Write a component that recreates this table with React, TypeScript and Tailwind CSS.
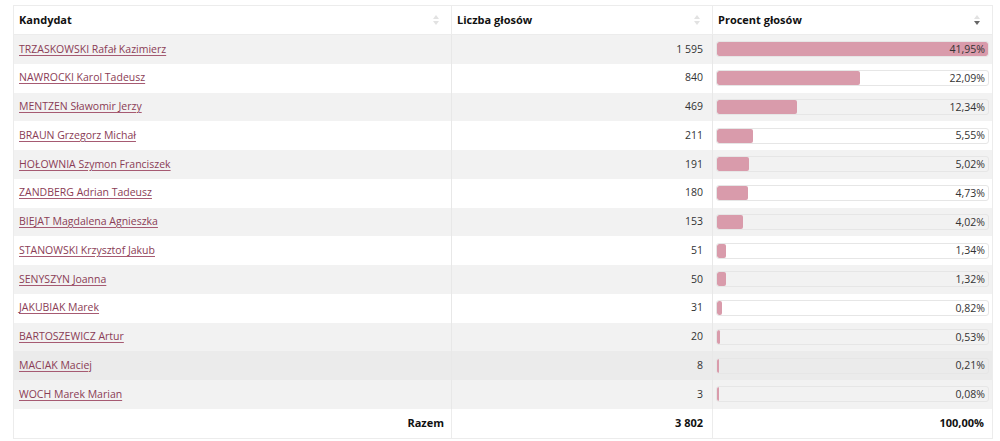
import React from "react";

const rows: [string, string, number][] = [
  ["TRZASKOWSKI Rafał Kazimierz", "1 595", 41.95],
  ["NAWROCKI Karol Tadeusz", "840", 22.09],
  ["MENTZEN Sławomir Jerzy", "469", 12.34],
  ["BRAUN Grzegorz Michał", "211", 5.55],
  ["HOŁOWNIA Szymon Franciszek", "191", 5.02],
  ["ZANDBERG Adrian Tadeusz", "180", 4.73],
  ["BIEJAT Magdalena Agnieszka", "153", 4.02],
  ["STANOWSKI Krzysztof Jakub", "51", 1.34],
  ["SENYSZYN Joanna", "50", 1.32],
  ["JAKUBIAK Marek", "31", 0.82],
  ["BARTOSZEWICZ Artur", "20", 0.53],
  ["MACIAK Maciej", "8", 0.21],
  ["WOCH Marek Marian", "3", 0.08],
];

function SortIcon({ active }: { active?: boolean }) {
  return (
    <svg width="6" height="10" viewBox="0 0 6 10" className="shrink-0">
      <path d="M3 0 L6 4 L0 4 Z" fill="#e2e2e2" />
      <path d="M3 10 L6 6 L0 6 Z" fill={active ? "#666" : "#e2e2e2"} />
    </svg>
  );
}

export default function App() {
  const max = 41.95;
  return (
    <div
      className="w-[1000px] h-[441px] bg-white pt-[5px] pl-[13px]"
      style={{ fontFamily: '"Open Sans", "Liberation Sans", sans-serif' }}
    >
      <div className="w-[980px] border border-[#ececec] text-[10.5px] text-[#333]">
        <div className="flex h-[29px] bg-white font-bold text-[11px] text-[#111] border-b border-[#ececec]">
          <div className="w-[438px] flex items-center justify-between pl-[5px] pr-[12px] border-r border-[#ececec]">
            <span>Kandydat</span>
            <SortIcon />
          </div>
          <div className="w-[261px] flex items-center justify-between pl-[5px] pr-[12px] border-r border-[#ececec]">
            <span>Liczba głosów</span>
            <SortIcon />
          </div>
          <div className="flex-1 flex items-center justify-between pl-[5px] pr-[12px]">
            <span>Procent głosów</span>
            <SortIcon active />
          </div>
        </div>
        {rows.map(([name, votes, pct], i) => {
          const bg =
            i === 11 ? "bg-[#ebebeb]" : i % 2 === 0 ? "bg-[#f2f2f2]" : "bg-white";
          return (
            <div key={name} className={`flex h-[28.75px] ${bg}`}>
              <div className="w-[438px] flex items-center pl-[5px] border-r border-[#e8e8e8]">
                <a href="#" className="text-[#8a3c55] underline underline-offset-[1.5px] decoration-[#a65a72]">
                  {name}
                </a>
              </div>
              <div className="w-[261px] flex items-center justify-end pr-[9px] border-r border-[#e8e8e8]">
                {votes}
              </div>
              <div className="flex-1 flex items-center pl-[3px] pr-[3px]">
                <div className="relative w-full h-[16px] rounded-[3px] border border-[#e6e6e6] overflow-hidden">
                  <div
                    className="absolute left-0 top-0 bottom-0 bg-[#d99bab] rounded-[2px]"
                    style={{ width: `${Math.max((pct / max) * 100, 0.6)}%` }}
                  />
                  <div className="relative h-full flex items-center justify-end pr-[3px] leading-none">
                    {pct.toFixed(2).replace(".", ",")}%
                  </div>
                </div>
              </div>
            </div>
          );
        })}
        <div className="flex h-[28.75px] bg-white font-bold text-[11px] text-[#111]">
          <div className="w-[438px] flex items-center justify-end pr-[7px] border-r border-[#ececec]">
            Razem
          </div>
          <div className="w-[261px] flex items-center justify-end pr-[9px] border-r border-[#ececec]">
            3 802
          </div>
          <div className="flex-1 flex items-center justify-end pr-[8px]">100,00%</div>
        </div>
      </div>
    </div>
  );
}
